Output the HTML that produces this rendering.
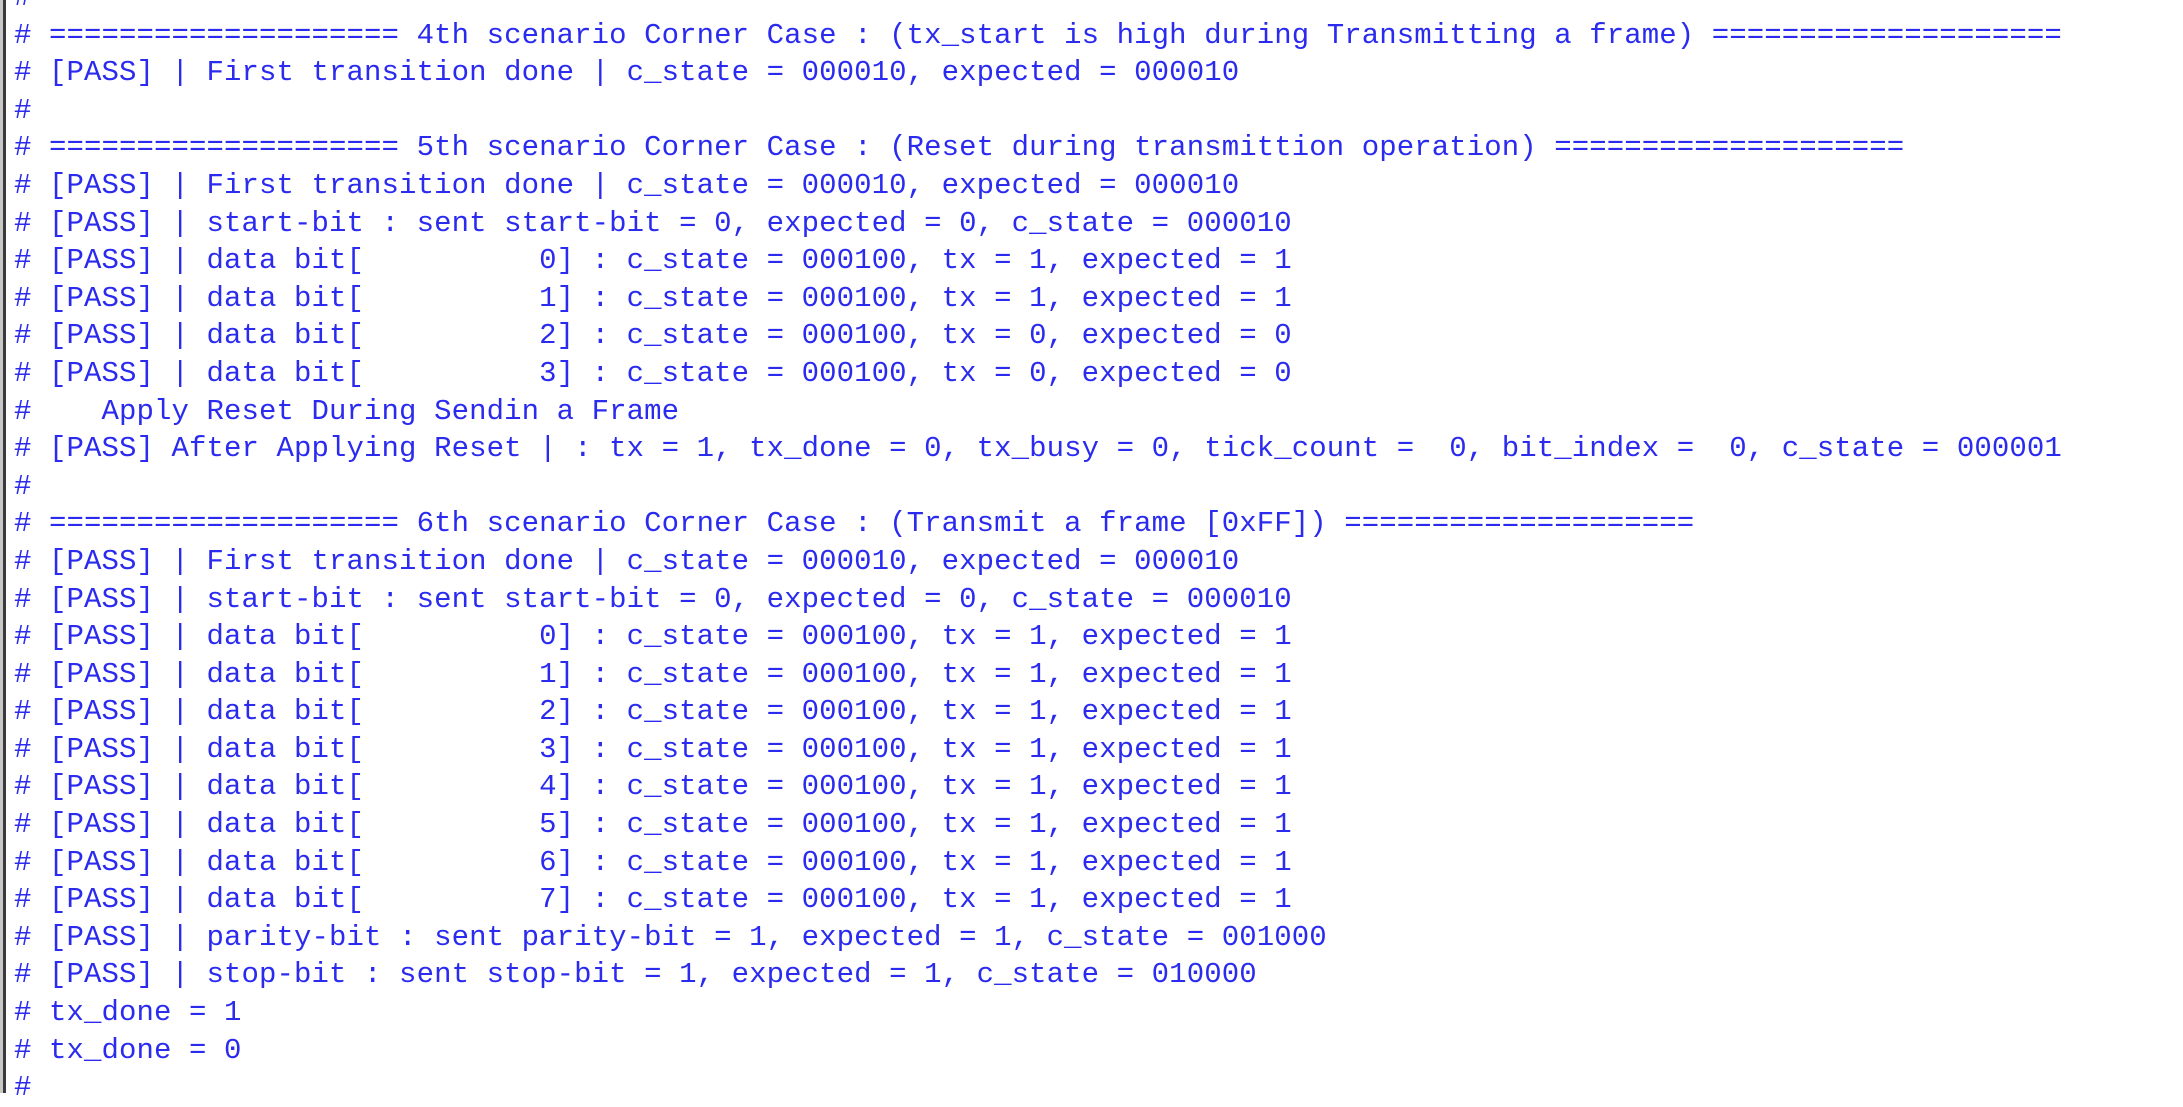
<!DOCTYPE html>
<html><head><meta charset="utf-8"><style>
html,body{margin:0;padding:0;background:#fff;width:2183px;height:1093px;overflow:hidden;}
.bar{position:absolute;left:0;top:0;width:3px;height:1093px;background:#c8c8c8;}
.bar2{position:absolute;left:3px;top:0;width:3px;height:1093px;background:#3a3a3a;}
pre{position:absolute;left:14px;top:-21px;margin:0;font-family:"Liberation Mono","Courier New",monospace;font-size:29px;letter-spacing:0.1px;line-height:37.6px;color:#2b2bf0;white-space:pre;}
</style></head><body>
<div class="bar"></div><div class="bar2"></div>
<pre>#
# ==================== 4th scenario Corner Case : (tx_start is high during Transmitting a frame) ====================
# [PASS] | First transition done | c_state = 000010, expected = 000010
#
# ==================== 5th scenario Corner Case : (Reset during transmittion operation) ====================
# [PASS] | First transition done | c_state = 000010, expected = 000010
# [PASS] | start-bit : sent start-bit = 0, expected = 0, c_state = 000010
# [PASS] | data bit[          0] : c_state = 000100, tx = 1, expected = 1
# [PASS] | data bit[          1] : c_state = 000100, tx = 1, expected = 1
# [PASS] | data bit[          2] : c_state = 000100, tx = 0, expected = 0
# [PASS] | data bit[          3] : c_state = 000100, tx = 0, expected = 0
#    Apply Reset During Sendin a Frame
# [PASS] After Applying Reset | : tx = 1, tx_done = 0, tx_busy = 0, tick_count =  0, bit_index =  0, c_state = 000001
#
# ==================== 6th scenario Corner Case : (Transmit a frame [0xFF]) ====================
# [PASS] | First transition done | c_state = 000010, expected = 000010
# [PASS] | start-bit : sent start-bit = 0, expected = 0, c_state = 000010
# [PASS] | data bit[          0] : c_state = 000100, tx = 1, expected = 1
# [PASS] | data bit[          1] : c_state = 000100, tx = 1, expected = 1
# [PASS] | data bit[          2] : c_state = 000100, tx = 1, expected = 1
# [PASS] | data bit[          3] : c_state = 000100, tx = 1, expected = 1
# [PASS] | data bit[          4] : c_state = 000100, tx = 1, expected = 1
# [PASS] | data bit[          5] : c_state = 000100, tx = 1, expected = 1
# [PASS] | data bit[          6] : c_state = 000100, tx = 1, expected = 1
# [PASS] | data bit[          7] : c_state = 000100, tx = 1, expected = 1
# [PASS] | parity-bit : sent parity-bit = 1, expected = 1, c_state = 001000
# [PASS] | stop-bit : sent stop-bit = 1, expected = 1, c_state = 010000
# tx_done = 1
# tx_done = 0
#</pre>
</body></html>
